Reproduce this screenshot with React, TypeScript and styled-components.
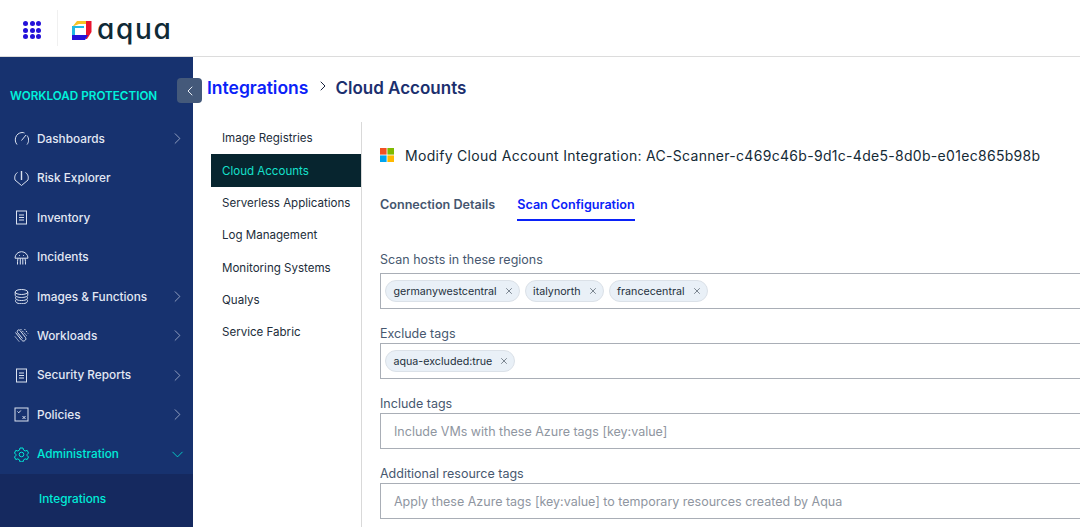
import React from "react";
import styled, { createGlobalStyle } from "styled-components";
import { ChevronRight, ChevronLeft, ChevronDown, X } from "lucide-react";

const Global = createGlobalStyle`
  html, body { margin: 0; padding: 0; height: 100%; overflow: hidden; background: #fff; }
  body { font-family: Inter, "Liberation Sans", sans-serif; }
  #root { height: 100%; }
`;

const Page = styled.div`
  width: 1080px;
  height: 527px;
  display: flex;
  flex-direction: column;
  overflow: hidden;
`;

const TopBar = styled.header`
  height: 56px;
  flex: none;
  display: flex;
  align-items: center;
  border-bottom: 1px solid #dcdcdc;
  background: #fff;
`;

const AppsButton = styled.div`
  width: 58px;
  height: 36px;
  display: flex;
  align-items: center;
  padding: 4px 0 0 23px;
  border-right: 1px solid #f0f0f0;
  box-sizing: border-box;
  margin-right: 14px;
`;

const AppsGrid = styled.div`
  display: grid;
  grid-template-columns: repeat(3, 5px);
  grid-auto-rows: 5px;
  gap: 1.5px;
`;

const AppsDot = styled.span`
  border-radius: 50%;
  background: #2412d9;
`;

const LogoBox = styled.div`
  display: flex;
  align-items: center;
  gap: 5px;
  margin-top: 5px;
`;

const Wordmark = styled.span`
  font-family: Inter, sans-serif;
  font-feature-settings: "cv11";
  font-size: 28px;
  font-weight: 500;
  line-height: 30px;
  letter-spacing: 1.7px;
  color: #0f2a36;
  position: relative;
  top: -2px;
`;

const Body = styled.div`
  flex: 1;
  display: flex;
  min-height: 0;
`;

const Sidebar = styled.nav`
  width: 193px;
  flex: none;
  background: #17326f;
  display: flex;
  flex-direction: column;
  position: relative;
`;

const ProductName = styled.div`
  font-size: 11.7px;
  font-weight: 600;
  color: #00f2dc;
  height: 29px;
  flex: none;
  margin-top: 24px;
  padding-left: 10px;
  display: flex;
  align-items: center;
  margin-bottom: 9.3px;
`;

const NavList = styled.div`
  display: flex;
  flex-direction: column;
  flex: none;
`;

const NavRow = styled.div<{ $active?: boolean }>`
  height: 39.4px;
  flex: none;
  display: flex;
  align-items: center;
  padding-left: 14px;
  padding-right: 6px;
  gap: 8px;
  font-size: 11.8px;
  font-weight: 500;
  color: ${(p) => (p.$active ? "#00ecd8" : "#e3e8f4")};
  svg.icon {
    width: 15px;
    height: 15px;
    flex: none;
    fill: none;
    stroke: ${(p) => (p.$active ? "#00ecd8" : "#dbe2f0")};
    stroke-width: 1;
  }
`;

const NavLabel = styled.span`
  flex: 1;
  white-space: nowrap;
`;

const SubNav = styled.div`
  flex: 1;
  background: #15295f;
  padding-left: 39px;
  padding-top: 18px;
  font-size: 11.8px;
  font-weight: 500;
  color: #00ecd8;
`;

const Collapse = styled.div`
  position: absolute;
  left: 177px;
  top: 21px;
  width: 25px;
  height: 25px;
  border-radius: 4px;
  background: #44597a;
  color: #e8ecf3;
  display: flex;
  align-items: center;
  justify-content: center;
`;

const Main = styled.main`
  flex: 1;
  min-width: 0;
  display: flex;
  flex-direction: column;
  padding-left: 14px;
`;

const Breadcrumb = styled.div`
  height: 65px;
  flex: none;
  display: flex;
  align-items: flex-start;
  padding-top: 20px;
  box-sizing: border-box;
  font-size: 17px;
  font-weight: 600;
  line-height: 22px;
  color: #1b2f6e;
`;

const CrumbLink = styled.span`
  color: #0a22f8;
  font-size: 17.5px;
`;

const CrumbSep = styled.span`
  width: 27px;
  height: 17px;
  display: flex;
  align-items: center;
  justify-content: center;
  padding-left: 3px;
  box-sizing: border-box;
  color: #1a2540;
`;

const Columns = styled.div`
  flex: 1;
  display: flex;
  min-height: 0;
`;

const SideTabs = styled.div`
  width: 150px;
  flex: none;
  display: flex;
  flex-direction: column;
  border-right: 1px solid #d9d9d9;
  margin-left: 4px;
`;

const SideTab = styled.div<{ $active?: boolean }>`
  height: 32.35px;
  flex: none;
  display: flex;
  align-items: center;
  padding-left: 11px;
  font-size: 11.55px;
  white-space: nowrap;
  background: ${(p) => (p.$active ? "#07252f" : "transparent")};
  color: ${(p) => (p.$active ? "#15e0cc" : "#222d3a")};
`;

const Content = styled.section`
  flex: 1;
  min-width: 0;
  padding-left: 18px;
  display: flex;
  flex-direction: column;
`;

const TitleRow = styled.div`
  display: flex;
  flex: none;
  align-items: center;
  gap: 11px;
  height: 24px;
  margin-top: 21px;
`;

const Title = styled.h1`
  margin: 0;
  font-size: 14px;
  font-weight: 400;
  letter-spacing: 0.3px;
  color: #142a36;
  white-space: nowrap;
`;

const Tabs = styled.div`
  display: flex;
  flex: none;
  gap: 22px;
  margin-top: 19px;
`;

const Tab = styled.div<{ $active?: boolean }>`
  height: 35px;
  box-sizing: border-box;
  padding-top: 11px;
  font-size: 12.6px;
  line-height: 16px;
  font-weight: 600;
  white-space: nowrap;
  color: ${(p) => (p.$active ? "#0a22f8" : "#45566f")};
  border-bottom: 2px solid ${(p) => (p.$active ? "#0a22f8" : "transparent")};
`;

const Form = styled.div`
  margin-top: 31px;
  display: flex;
  flex: none;
  flex-direction: column;
  gap: 17px;
`;

const Field = styled.div`
  display: flex;
  flex-direction: column;
  width: 900px;
`;

const FieldLabel = styled.label<{ $gap: number }>`
  font-size: 12.5px;
  line-height: 16px;
  color: #47586f;
  margin-bottom: ${(p) => p.$gap}px;
`;

const InputBox = styled.div`
  box-sizing: border-box;
  height: 36px;
  border: 1px solid #a9aeb6;
  display: flex;
  align-items: center;
  padding: 0 6px 0 4px;
  gap: 5px;
`;

const Placeholder = styled.span`
  font-size: 12.5px;
  color: #8f96a1;
  padding-left: 9px;
  white-space: nowrap;
`;

const Chip = styled.span`
  height: 22px;
  box-sizing: border-box;
  border: 1px solid #dbe1e8;
  border-radius: 11px;
  background: #e9f0f7;
  padding: 0 5px 0 7.5px;
  display: flex;
  align-items: center;
  gap: 7px;
  font-size: 10.7px;
  color: #24303d;
  white-space: nowrap;
`;

const Icons: Record<string, React.ReactNode> = {
  gauge: (
    <>
      <path d="M3 13.500C-.5 9.500 1.500 2 8 1.500c1 0 1.800.2 2.500.5" />
      <path d="M13 4.500c2.300 3 2 6.500 0 9" />
      <path d="M7.500 9.500l4.500-5.500" />
    </>
  ),
  shield: (
    <>
      <path d="M3.500 1.500C.5 3.500.5 6.500 1 9l6.500 5.500L14 9c.5-2.500.5-5.500-2.500-7.500" />
      <path d="M7.500 0v9" strokeWidth="1.400" />
    </>
  ),
  doc: (
    <>
      <rect x="2.500" y="1" width="10" height="13" />
      <path d="M5 5h5M5 7.500h5M5 10h5" />
    </>
  ),
  jelly: (
    <>
      <path d="M1 8.200a6.500 6.500 0 0 1 13 0z" />
      <path d="M3.500 14.500c0-2 0-4.500.5-6.300M6.300 14.500V8.200M8.800 14.500V8.200M11.500 14.500c0-2 0-4.500-.5-6.300" />
      <path d="M5 5.500h.8M9.200 5.500h.8" />
    </>
  ),
  stack: (
    <>
      <ellipse cx="7.500" cy="3" rx="6.300" ry="2.500" />
      <path d="M1.200 3v3c0 1.400 2.800 2.500 6.300 2.500s6.300-1.100 6.300-2.500V3" />
      <path d="M1.800 7.500c-.8 2 0 4 5.700 4s6.500-2 5.700-4" />
      <path d="M1.800 10.700c-.8 2 0 4 5.700 4s6.500-2 5.700-4" />
    </>
  ),
  clips: (
    <>
      <path d="M1.500 4.500l6 7.500c2 2.500 5.500 0 4-2.500L6 2.500C4.500 1 2.500 2.500 3.500 4.500L8.500 10.500" />
      <path d="M6.500 1l6.500 7M10.500 1l3.500 4.500M1 8.500l4.500 5.500" strokeDasharray="1.500 1" />
    </>
  ),
  policy: (
    <>
      <rect x="1" y="1" width="13" height="13" />
      <path d="M3.500 4.500l1.300 1.300 2-2.300M8.500 9l3 3M11.500 9l-3 3" />
    </>
  ),
  gear: (
    <>
      <circle cx="7.500" cy="7.500" r="2.300" />
      <path d="M6 1h3l.5 2 1.700 1 2-.6 1.300 2.600-1.400 1.500v1l1.400 1.500L13.200 12.500l-2-.6-1.700 1-.5 2H6l-.5-2-1.700-1-2 .6L.5 10l1.400-1.500v-1L.500 6l1.300-2.600 2 .6 1.700-1z" />
    </>
  ),
};

const NavIcon = ({ name }: { name: string }) => (
  <svg className="icon" viewBox="0 0 15 15">
    {Icons[name]}
  </svg>
);

const navItems = [
  { label: "Dashboards", icon: "gauge", arrow: true },
  { label: "Risk Explorer", icon: "shield" },
  { label: "Inventory", icon: "doc" },
  { label: "Incidents", icon: "jelly" },
  { label: "Images & Functions", icon: "stack", arrow: true },
  { label: "Workloads", icon: "clips", arrow: true },
  { label: "Security Reports", icon: "doc", arrow: true },
  { label: "Policies", icon: "policy", arrow: true },
];

const sideTabs = [
  "Image Registries",
  "Cloud Accounts",
  "Serverless Applications",
  "Log Management",
  "Monitoring Systems",
  "Qualys",
  "Service Fabric",
];

const Tag = ({ children }: { children: string }) => (
  <Chip>
    {children}
    <X size={10} strokeWidth={1.5} color="#3a4654" />
  </Chip>
);

const Logo = () => (
  <svg width="20" height="19" viewBox="1 0 20 19">
    <path d="M3 5L2 5l4-5h9v3H8z" fill="#f7c325" />
    <path d="M15 0h5.500v11L16 18h-1z" fill="#e9132f" />
    <path d="M1 5h12v2H4v7H1z" fill="#1fb9e3" />
    <path d="M1 14h16l-3 5H1z" fill="#2412d9" />
  </svg>
);

const MsLogo = () => (
  <svg width="14" height="14" viewBox="0 0 14 14">
    <rect width="6.600" height="6.600" fill="#f25022" />
    <rect x="7.400" width="6.600" height="6.600" fill="#7fba00" />
    <rect y="7.400" width="6.600" height="6.600" fill="#00a4ef" />
    <rect x="7.400" y="7.400" width="6.600" height="6.600" fill="#ffb900" />
  </svg>
);

export default function App() {
  return (
    <Page>
      <Global />
      <TopBar>
        <AppsButton>
          <AppsGrid>
            {Array.from({ length: 9 }).map((_, i) => (
              <AppsDot key={i} />
            ))}
          </AppsGrid>
        </AppsButton>
        <LogoBox>
          <Logo />
          <Wordmark>aqua</Wordmark>
        </LogoBox>
      </TopBar>
      <Body>
        <Sidebar>
          <Collapse>
            <ChevronLeft size={16} strokeWidth={1.5} />
          </Collapse>
          <ProductName>WORKLOAD PROTECTION</ProductName>
          <NavList>
            {navItems.map((n) => (
              <NavRow key={n.label}>
                <NavIcon name={n.icon} />
                <NavLabel>{n.label}</NavLabel>
                {n.arrow && <ChevronRight size={19} strokeWidth={1} color="#aeb9d2" />}
              </NavRow>
            ))}
            <NavRow $active>
              <NavIcon name="gear" />
              <NavLabel>Administration</NavLabel>
              <ChevronDown size={19} strokeWidth={1} color="#00ecd8" />
            </NavRow>
          </NavList>
          <SubNav>Integrations</SubNav>
        </Sidebar>
        <Main>
          <Breadcrumb>
            <CrumbLink>Integrations</CrumbLink>
            <CrumbSep>
              <ChevronRight size={16} strokeWidth={1.5} />
            </CrumbSep>
            Cloud Accounts
          </Breadcrumb>
          <Columns>
            <SideTabs>
              {sideTabs.map((t) => (
                <SideTab key={t} $active={t === "Cloud Accounts"}>
                  {t}
                </SideTab>
              ))}
            </SideTabs>
            <Content>
              <TitleRow>
                <MsLogo />
                <Title>
                  Modify Cloud Account Integration: AC-Scanner-c469c46b-9d1c-4de5-8d0b-e01ec865b98b
                </Title>
              </TitleRow>
              <Tabs>
                <Tab>Connection Details</Tab>
                <Tab $active>Scan Configuration</Tab>
              </Tabs>
              <Form>
                <Field>
                  <FieldLabel $gap={5}>Scan hosts in these regions</FieldLabel>
                  <InputBox>
                    <Tag>germanywestcentral</Tag>
                    <Tag>italynorth</Tag>
                    <Tag>francecentral</Tag>
                  </InputBox>
                </Field>
                <Field>
                  <FieldLabel $gap={1}>Exclude tags</FieldLabel>
                  <InputBox>
                    <Tag>aqua-excluded:true</Tag>
                  </InputBox>
                </Field>
                <Field>
                  <FieldLabel $gap={1}>Include tags</FieldLabel>
                  <InputBox>
                    <Placeholder>Include VMs with these Azure tags [key:value]</Placeholder>
                  </InputBox>
                </Field>
                <Field>
                  <FieldLabel $gap={1}>Additional resource tags</FieldLabel>
                  <InputBox>
                    <Placeholder>Apply these Azure tags [key:value] to temporary resources created by Aqua</Placeholder>
                  </InputBox>
                </Field>
              </Form>
            </Content>
          </Columns>
        </Main>
      </Body>
    </Page>
  );
}
